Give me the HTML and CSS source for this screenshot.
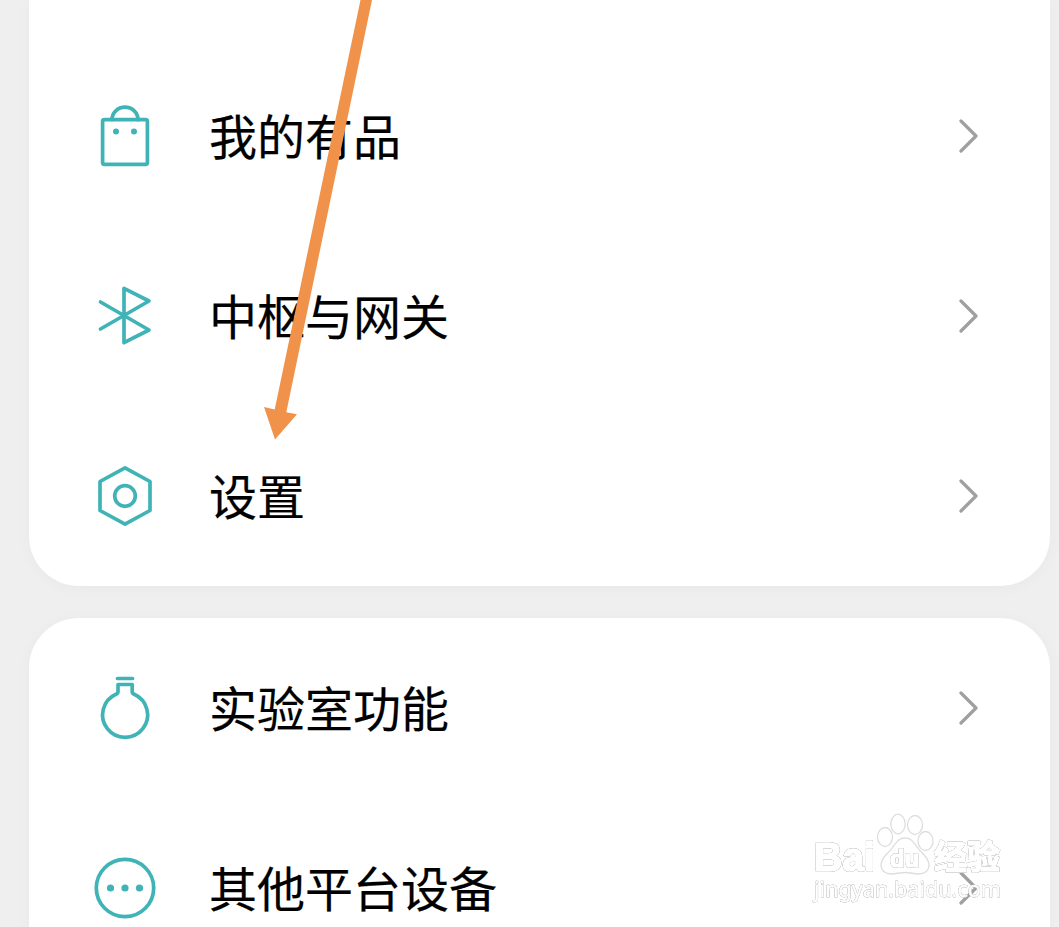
FILE: index.html
```html
<!DOCTYPE html>
<html lang="zh-CN">
  <head>
    <meta charset="UTF-8" />
    <meta name="viewport" content="width=device-width, initial-scale=1.0" />
    <title>我的</title>
    <link rel="stylesheet" href="styles.css">
  </head>
  <body>
    <main>
      <ul class="card card-top">
        <li class="row">
          <svg class="icon" viewBox="0 0 64 64">
            <rect x="9.6" y="15.6" width="44.8" height="44.8" rx="1.8" />
            <path d="M19 15.6a13 12.4 0 0 1 26 0" />
            <circle class="dot" cx="23" cy="27.5" r="3" />
            <circle class="dot" cx="41" cy="27.5" r="3" />
          </svg>
          <span class="label">我的有品</span>
          <svg class="chevron" viewBox="0 0 20 36"><path d="M3 3l15 15L3 33" /></svg>
        </li>
        <li class="row">
          <svg class="icon" viewBox="0 0 64 64">
            <path d="M7.5 18L56 46 31 58.7V4.3L56 17 7.5 45" />
          </svg>
          <span class="label">中枢与网关</span>
          <svg class="chevron" viewBox="0 0 20 36"><path d="M3 3l15 15L3 33" /></svg>
        </li>
        <li class="row">
          <svg class="icon" viewBox="0 0 64 64">
            <path d="M32 3.8L57 17.5v29L32 60.2 7 46.5v-29z" />
            <circle cx="32" cy="32" r="10.3" />
          </svg>
          <span class="label">设置</span>
          <svg class="chevron" viewBox="0 0 20 36"><path d="M3 3l15 15L3 33" /></svg>
        </li>
      </ul>

      <ul class="card card-bottom">
        <li class="row">
          <svg class="icon" viewBox="0 0 64 64">
            <path d="M24.5 2.5h15" />
            <path d="M25 8.5h14.2v7q0 2 2 2.8a22.5 22.5 0 1 1-18.2 0q2-.8 2-2.8z" />
          </svg>
          <span class="label">实验室功能</span>
          <svg class="chevron" viewBox="0 0 20 36"><path d="M3 3l15 15L3 33" /></svg>
        </li>
        <li class="row">
          <svg class="icon" viewBox="0 0 64 64">
            <circle cx="32" cy="32" r="28.7" />
            <circle class="dot" cx="17.5" cy="32" r="3.6" />
            <circle class="dot" cx="32" cy="32" r="3.6" />
            <circle class="dot" cx="46.5" cy="32" r="3.6" />
          </svg>
          <span class="label">其他平台设备</span>
          <svg class="chevron" viewBox="0 0 20 36"><path d="M3 3l15 15L3 33" /></svg>
        </li>
      </ul>
    </main>

    <!-- arrow pointing at 设置 -->
    <svg class="arrow" viewBox="0 0 120 440">
      <path d="M110.5 0H122L36.3 412.3l10.7 2L25 439.5 14 407l10.7 2.4z" />
    </svg>

    <svg class="watermark" viewBox="0 0 200 100">
      <text class="wm-brand" x="4" y="61" textLength="61" lengthAdjust="spacingAndGlyphs">Bai</text>
      <ellipse cx="75" cy="27" rx="7.5" ry="9.5" />
      <ellipse cx="88" cy="14" rx="7.2" ry="9.8" />
      <ellipse cx="105" cy="15" rx="7.5" ry="9.5" />
      <ellipse cx="115.5" cy="31" rx="7.5" ry="9.5" />
      <path d="M95 28c-7 0-9 5-12 9-4 6-12 10-12 18 0 6 5 9 10 9s9-1.5 14-1.5S104 64 109 64c5 0 10-3 10-9 0-8-8-12-12-18-3-4-5-9-12-9z" />
      <text class="wm-du" x="80" y="57" textLength="29" lengthAdjust="spacingAndGlyphs">du</text>
      <text class="wm-cn" x="124" y="59">经验</text>
      <text class="wm-url" x="4" y="87" textLength="187" lengthAdjust="spacingAndGlyphs">jingyan.baidu.com</text>
    </svg>
  </body>
</html>
```

FILE: styles.css
```css
body {
  margin: 0;
  height: 927px;
  position: relative;
  overflow: hidden;
  background: #efefef;
  font-family: "Noto Sans CJK SC", sans-serif;
}

main {
  display: flex;
  flex-direction: column;
  gap: 32px;
  height: 927px;
  overflow: hidden;
  padding: 0 9px 0 29px;
}

.card {
  flex: none;
  list-style: none;
  margin: 0;
  padding: 0;
  background: #ffffff;
  border-radius: 50px;
  box-shadow: 0 2px 16px rgba(0, 0, 0, 0.03);
}

.card-top {
  padding-top: 46px;
  border-top-left-radius: 0;
  border-top-right-radius: 0;
}

/* runs on below the screen */
.card-bottom {
  height: 309px;
  border-bottom-left-radius: 0;
  border-bottom-right-radius: 0;
}

.row {
  display: flex;
  align-items: center;
  height: 180px;
  padding: 0 72px 0 64px;
}

.icon {
  width: 64px;
  height: 64px;
  flex: none;
  fill: none;
  stroke: #40b3b6;
  stroke-width: 3.7;
  stroke-linecap: round;
  stroke-linejoin: round;
}

.icon .dot {
  fill: #40b3b6;
  stroke: none;
}

.label {
  flex: 1;
  margin-left: 52px;
  margin-bottom: 4px;
  font-size: 48px;
  line-height: 70px;
  color: #000000;
  -webkit-text-stroke: 0.2px #000000;
}

.chevron {
  width: 20px;
  height: 36px;
  flex: none;
  fill: none;
  stroke: #a0a0a0;
  stroke-width: 3.2;
  stroke-linecap: round;
  stroke-linejoin: round;
}

.arrow {
  position: absolute;
  left: 250px;
  top: 0;
  width: 120px;
  height: 440px;
  overflow: visible;
  fill: #f0924a;
}

/* Watermark */

.watermark {
  position: absolute;
  left: 810px;
  top: 810px;
  width: 200px;
  height: 100px;
  fill: #ffffff;
  stroke: #dedede;
  stroke-width: 1.3;
}

.watermark text {
  paint-order: stroke;
  stroke: #ffffff;
  stroke-width: 1.6;
  stroke-linejoin: round;
  filter: drop-shadow(0 0 0.6px #8c8c8c) drop-shadow(0 0 0.4px #c8c8c8);
}

.wm-brand {
  font: bold 40px "Liberation Sans", sans-serif;
}

.wm-du {
  font: bold 23px "Liberation Sans", sans-serif;
}

.wm-cn {
  font: bold 33px "Noto Sans CJK SC", sans-serif;
}

.watermark .wm-url {
  font: 22px "Noto Sans", sans-serif;
  stroke-width: 0.6;
}
```
